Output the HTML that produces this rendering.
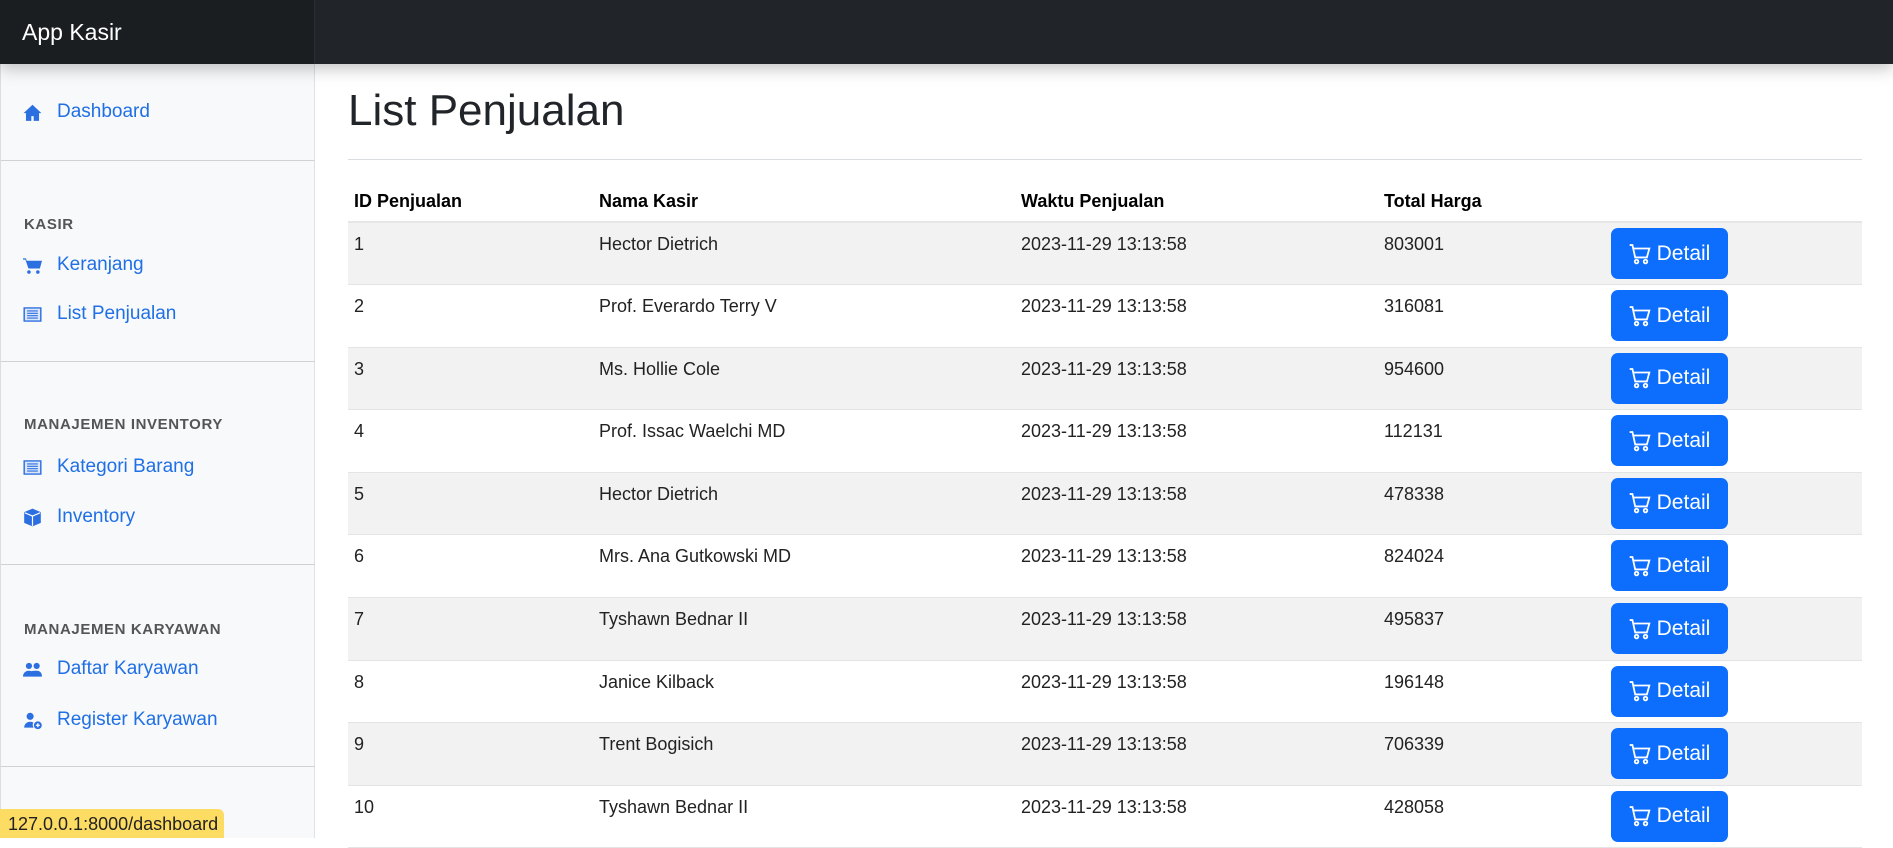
<!DOCTYPE html>
<html><head><meta charset="utf-8"><style>
*{box-sizing:border-box;margin:0;padding:0}
body{width:1893px;height:838px;overflow:hidden;font-family:"Liberation Sans",sans-serif;background:#fff;position:relative;color:#212529}
.nav{position:absolute;left:0;top:0;width:1893px;height:64px;background:#212529;box-shadow:0 4px 16px rgba(0,0,0,.25);z-index:3}
.brand{position:absolute;left:0;top:0;width:315px;height:64px;background:#1b1e21;color:#fff;font-size:23px;line-height:64px;padding-left:22px;box-shadow:inset -1px 0 0 rgba(255,255,255,.08)}
.side{position:absolute;left:0;top:64px;width:315px;height:774px;background:#f8f9fa;border-right:1px solid #dee2e6;border-left:1px solid #ddd}
.it{position:absolute;left:22px;font-size:19px;color:#1f6fe5;display:flex;align-items:center;height:24px;margin-top:-12px;font-weight:500}
.it svg{width:19px;height:19px;margin-right:15px;fill:#2c6fe0}
.hd{position:absolute;left:23px;font-size:15px;font-weight:bold;color:#555;letter-spacing:.6px;margin-top:-9px}
.dv{position:absolute;left:0;width:314px;height:1px;background:#d0d3d6}
h1{position:absolute;left:348px;top:86px;font-size:44px;font-weight:normal;color:#212529}
.hr{position:absolute;left:348px;top:159px;width:1514px;height:1px;background:#dadde0}
table{position:absolute;left:348px;top:182px;width:1514px;border-collapse:collapse;font-size:18px}
th{text-align:left;font-weight:bold;height:40px;padding:0 6px;vertical-align:middle;color:#000;border-bottom:2px solid #e4e6e8}
td{height:62.6px;padding:11px 6px 0;vertical-align:top;border-bottom:1px solid #e2e4e6;color:#222}
tr:nth-child(odd) td{background:#f2f2f2}
td.b{padding:5px 0 0 6px}
.btn{display:inline-flex;align-items:center;justify-content:center;width:117px;height:51px;background:#0d6efd;border-radius:7px;color:#fff;font-size:21px}
.btn svg{width:22px;height:22px;margin-right:6px}
.st{position:absolute;left:0;top:809px;width:224px;height:29px;background:#fcdc63;border-top-right-radius:6px;font-size:18px;line-height:30px;padding-left:8px;color:#222;z-index:4}
</style></head><body>
<div class="nav"><div class="brand">App Kasir</div></div>
<div class="side">
<div class="it" style="top:48px"><svg viewBox="0 0 16 16"><path d="M8 1.5 0.5 8.5h2V15h4.5v-4h2v4h4.5V8.5h2z"/></svg>Dashboard</div>
<div class="dv" style="top:96px"></div>
<div class="hd" style="top:161px">KASIR</div>
<div class="it" style="top:201px"><svg viewBox="0 0 16 16"><path d="M0 2h2.5l.6 2H16l-1.8 6.5H4.6L2 3H0z"/><circle cx="5" cy="13.5" r="1.5"/><circle cx="12.5" cy="13.5" r="1.5"/></svg>Keranjang</div>
<div class="it" style="top:250px"><svg viewBox="0 0 16 16"><path d="M1 2.5h14v11H1z" fill="#dbe6fb" stroke="#2c6fe0" stroke-width="1.2"/><path d="M3.5 5h9M3.5 7h9M3.5 9h9M3.5 11h9" stroke="#2c6fe0" stroke-width="1"/></svg>List Penjualan</div>
<div class="dv" style="top:297px"></div>
<div class="hd" style="top:361px">MANAJEMEN INVENTORY</div>
<div class="it" style="top:403px"><svg viewBox="0 0 16 16"><path d="M1 2.5h14v11H1z" fill="#dbe6fb" stroke="#2c6fe0" stroke-width="1.2"/><path d="M3.5 5h9M3.5 7h9M3.5 9h9M3.5 11h9" stroke="#2c6fe0" stroke-width="1"/></svg>Kategori Barang</div>
<div class="it" style="top:453px"><svg viewBox="0 0 16 16"><path d="M8 0.5 15 3.5v9L8 15.5 1 12.5v-9z"/><path d="M1.5 4 8 6.8 14.5 4M8 6.8V15" stroke="#fff" stroke-width="1" fill="none"/></svg>Inventory</div>
<div class="dv" style="top:500px"></div>
<div class="hd" style="top:566px">MANAJEMEN KARYAWAN</div>
<div class="it" style="top:605px"><svg viewBox="0 0 16 16"><circle cx="5" cy="5" r="2.6"/><circle cx="11.5" cy="5" r="2.6"/><path d="M0 14c0-3 2-5 5-5s5 2 5 5zM8.5 14c0-2-.5-3.5-1.5-4.5 1-.5 2.5-.5 4.5-.5 3 0 4.5 2 4.5 5z"/></svg>Daftar Karyawan</div>
<div class="it" style="top:656px"><svg viewBox="0 0 16 16"><circle cx="6" cy="4.5" r="3"/><path d="M1 14c0-3 2.3-5 5-5 1 0 2 .2 2.7.7A4 4 0 0 0 9 14z"/><circle cx="12.5" cy="12" r="3.3"/><path d="M12.5 10.3v3.4M10.8 12h3.4" stroke="#fff" stroke-width="1.1"/></svg>Register Karyawan</div>
<div class="dv" style="top:702px"></div>
</div>
<h1>List Penjualan</h1>
<div class="hr"></div>
<table>
<colgroup><col style="width:245px"><col style="width:422px"><col style="width:363px"><col style="width:227px"><col></colgroup>
<tr><th>ID Penjualan</th><th>Nama Kasir</th><th>Waktu Penjualan</th><th>Total Harga</th><th></th></tr>
<tbody id="b"></tbody>
</table>
<div class="st">127.0.0.1:8000/dashboard</div>
<script>
var d=[["Hector Dietrich",803001],["Prof. Everardo Terry V",316081],["Ms. Hollie Cole",954600],["Prof. Issac Waelchi MD",112131],["Hector Dietrich",478338],["Mrs. Ana Gutkowski MD",824024],["Tyshawn Bednar II",495837],["Janice Kilback",196148],["Trent Bogisich",706339],["Tyshawn Bednar II",428058]];
var cart='<svg viewBox="0 0 16 16" fill="none" stroke="#fff" stroke-width="1.3"><path d="M0.5 1.5h2l2 9h8.5l1.8-6.5H3.3"/><circle cx="5.5" cy="13.5" r="1.3"/><circle cx="12" cy="13.5" r="1.3"/></svg>';
var h='';d.forEach(function(r,i){h+='<tr><td>'+(i+1)+'</td><td>'+r[0]+'</td><td>2023-11-29 13:13:58</td><td>'+r[1]+'</td><td class="b"><span class="btn">'+cart+'Detail</span></td></tr>';});
document.getElementById('b').innerHTML=h;
</script>
</body></html>
